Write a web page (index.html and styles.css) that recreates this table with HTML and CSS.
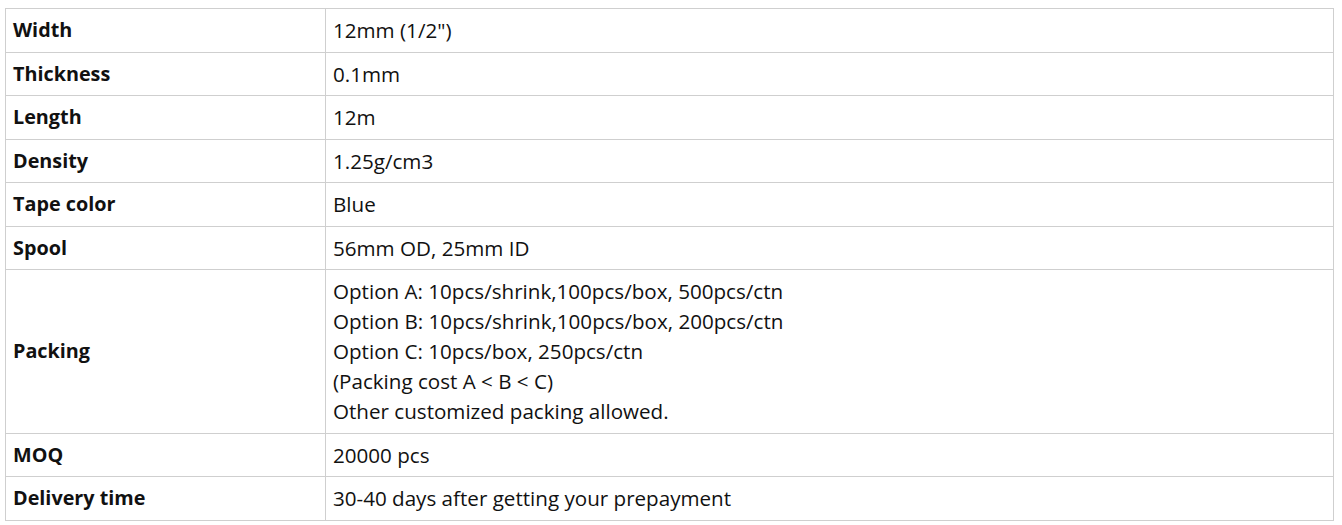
FILE: index.html
```html
<!DOCTYPE html>
<html>
<head>
<meta charset="utf-8">
<link rel="stylesheet" href="styles.css">
</head>
<body>
<table class="spec">
  <colgroup><col class="c1"><col class="c2"></colgroup>
  <tr><th>Width</th><td>12mm (1/2")</td></tr>
  <tr><th>Thickness</th><td>0.1mm</td></tr>
  <tr><th>Length</th><td>12m</td></tr>
  <tr><th>Density</th><td>1.25g/cm3</td></tr>
  <tr><th>Tape color</th><td>Blue</td></tr>
  <tr><th>Spool</th><td>56mm OD, 25mm ID</td></tr>
  <tr><th>Packing</th><td>Option A: 10pcs/shrink,100pcs/box, 500pcs/ctn<br>Option B: 10pcs/shrink,100pcs/box, 200pcs/ctn<br>Option C: 10pcs/box, 250pcs/ctn<br>(Packing cost A &lt; B &lt; C)<br>Other customized packing allowed.</td></tr>
  <tr><th>MOQ</th><td>20000 pcs</td></tr>
  <tr><th>Delivery time</th><td>30-40 days after getting your prepayment</td></tr>
</table>
</body>
</html>
```
FILE: styles.css
```css
body {
  margin: 8px 8px 0 5px;
  background: #fff;
  font-family: "Open Sans", "Noto Sans", sans-serif;
  color: #111;
}
.spec {
  border-collapse: collapse;
  width: 1329px;
  line-height: 30px;
}
.c1 { width: 320px; }
.spec th, .spec td {
  border: 1px solid #cfcfcf;
  padding: 6.25px 7px;
  text-align: left;
  vertical-align: middle;
}
.spec th { font-weight: 700; font-size: 19.8px; }
.spec td { font-weight: 400; font-size: 20.6px; }
```
